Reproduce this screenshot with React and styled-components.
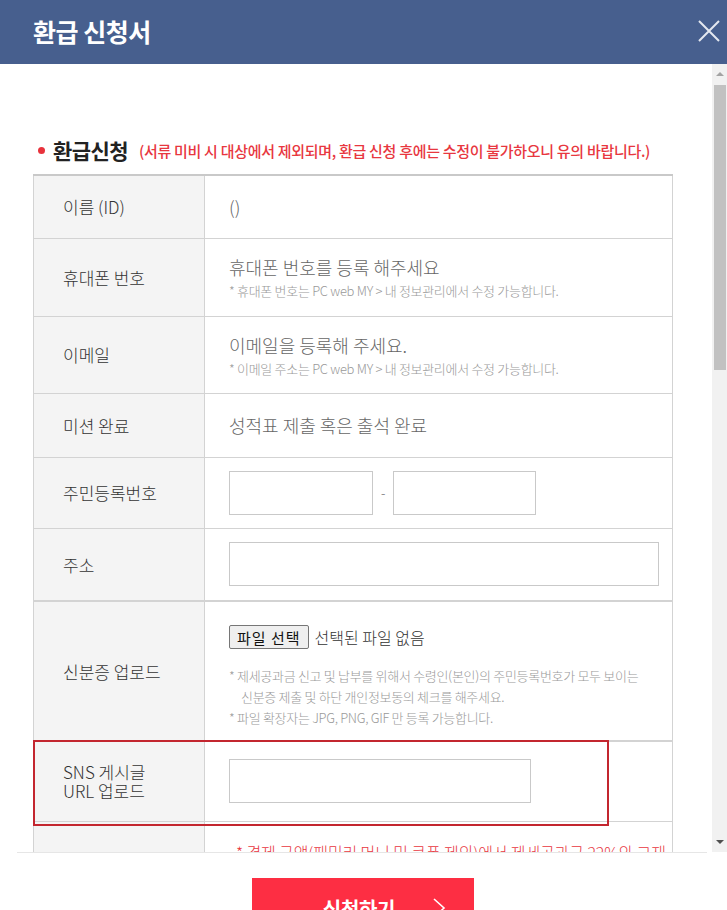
import styled, { createGlobalStyle } from "styled-components";

const GlobalStyle = createGlobalStyle`
  html, body {
    margin: 0;
    padding: 0;
    overflow: hidden;
    background: #fff;
  }
  body {
    font-family: "Noto Sans CJK KR", "Noto Sans", sans-serif;
    color: #333;
  }
  * { box-sizing: border-box; }
`

const Page = styled.div`
  width: 727px;
  display: flex;
  flex-direction: column;
`
const Header = styled.header`
  height: 64px;
  background-color: #475f8e;
  display: flex;
  align-items: center;
  justify-content: space-between;
  padding: 0 7px 3px 33px;
`
const Title = styled.h1`
  margin: 0;
  color: #fff;
  font-size: 25px;
  font-weight: 700;
  letter-spacing: -0.5px;
`
const Close = styled.button`
  border: 0;
  background: none;
  padding: 0;
  width: 22px;
  height: 22px;
  display: flex;
  cursor: pointer;
`
const Body = styled.div`
  height: 788px;
  display: flex;
`
const Viewport = styled.div`
  flex: 1;
  overflow-y: scroll;
  scrollbar-width: none;
  &::-webkit-scrollbar { display: none; }
`
const Rail = styled.div`
  width: 15px;
  background: #f1f1f1;
  display: flex;
  flex-direction: column;
  align-items: flex-end;
`
const Arrow = styled.div`
  width: 15px;
  height: 20px;
  display: flex;
  align-items: center;
  justify-content: center;
  padding-left: 1px;
  &::before {
    content: "";
    border-left: 4px solid transparent;
    border-right: 4px solid transparent;
    ${p => (p.$down ? "border-top" : "border-bottom")}: 4px solid ${p => (p.$down ? "#505050" : "#a3a3a3")};
  }
`
const Thumb = styled.div`
  width: 12px;
  height: 285px;
  margin: 1px 1px 0 0;
  background: #c1c1c1;
`
const Spacer = styled.div`
  flex: 1;
`
const Content = styled.div`
  padding: 74px 39px 60px 33px;
`
const SectionTitle = styled.div`
  display: flex;
  align-items: center;
  height: 24px;
  margin-bottom: 12px;
  padding-left: 5px;
`
const Dot = styled.span`
  width: 7px;
  height: 7px;
  border-radius: 50%;
  background: #e8323c;
  margin-right: 8px;
`
const Heading = styled.strong`
  font-size: 21px;
  font-weight: 700;
  color: #222;
  letter-spacing: -0.6px;
  margin-right: 11px;
`
const Warn = styled.span`
  font-size: 15px;
  font-weight: 500;
  color: #e8373f;
  letter-spacing: -0.3px;
`
const TableWrap = styled.div`
  position: relative;
`
const Table = styled.table`
  width: 640px;
  border-collapse: collapse;
  border-top: 2px solid #c9c9c9;
  table-layout: fixed;
`
const Row = styled.tr`
  border-top: ${p => (p.$thick ? "2px" : "1px")} solid #d3d3d3;
  border-bottom: 1px solid #d3d3d3;
`
const Label = styled.th`
  width: 171px;
  height: ${p => p.$h}px;
  background: #f4f4f4;
  border-left: 1px solid #d3d3d3;
  border-right: 1px solid #d3d3d3;
  padding: 0 0 0 29px;
  text-align: left;
  font-size: 17px;
  font-weight: 300;
  color: #333;
  line-height: 19px;
  vertical-align: middle;
`
const Value = styled.td`
  border-right: 1px solid #d3d3d3;
  padding: ${p => p.$pad || "0 13px 0 24px"};
  vertical-align: ${p => (p.$top ? "top" : "middle")};
  font-size: 18px;
  font-weight: 300;
  color: #666;
  line-height: 26px;
`
const Note = styled.p`
  margin: ${p => p.$gap || 0}px 0 0;
  padding-left: ${p => (p.$indent ? "12px" : 0)};
  font-size: 13px;
  line-height: ${p => p.$lh || 18}px;
  color: #999;
  letter-spacing: -0.3px;
`
const Input = styled.input`
  display: block;
  width: ${p => p.$w || "100%"};
  height: 44px;
  border: 1px solid #c9c9c9;
  background: #fff;
  outline: none;
  font-size: 14px;
`
const Inline = styled.div`
  display: flex;
  align-items: center;
`
const Dash = styled.span`
  margin: 0 8px;
  font-size: 13px;
  color: #666;
`
const FileBtn = styled.button`
  height: 24px;
  padding: 0 7px;
  border: 1px solid #767676;
  border-radius: 2px;
  background: #efefef;
  font-family: inherit;
  font-size: 15px;
  letter-spacing: 1px;
  color: #111;
  margin-right: 6px;
`
const FileName = styled.span`
  font-size: 16px;
  color: #333;
`
const RedNote = styled.p`
  margin: 0;
  padding-left: 7px;
  font-size: 16px;
  line-height: 24px;
  color: #e8373f;
  letter-spacing: -0.1px;
  white-space: nowrap;
`
const Mark = styled.div`
  position: absolute;
  left: 0;
  top: ${p => p.$top}px;
  width: 576px;
  height: 86px;
  border: 2px solid #c3262f;
  pointer-events: none;
`
const Select = styled.select`
  height: 44px;
  width: 140px;
  border: 1px solid #c9c9c9;
  background: #fff;
  margin-right: 8px;
  font-size: 14px;
  color: #666;
`
const Agree = styled.section`
  margin-top: 40px;
`
const Terms = styled.div`
  height: 200px;
  border: 1px solid #d3d3d3;
  padding: 16px 18px;
  font-size: 13px;
  line-height: 22px;
  color: #777;
  overflow: hidden;
`
const Check = styled.label`
  display: flex;
  align-items: center;
  gap: 6px;
  margin-top: 12px;
  font-size: 14px;
  color: #444;
`
const Footer = styled.footer`
  margin: 0 20px 0 17px;
  border-top: 1px solid #e6e6e6;
  padding-top: 25px;
  display: flex;
  justify-content: center;
`
const Submit = styled.button`
  width: 222px;
  height: 60px;
  border: 0;
  margin-left: 2px;
  background: #fd2e43;
  color: #fff;
  font-family: inherit;
  font-size: 20px;
  font-weight: 700;
  letter-spacing: -0.3px;
  display: flex;
  align-items: center;
  justify-content: center;
  gap: 36px;
  padding-left: 50px;
`

const terms = [
  "1. 수집 항목 : 이름, 아이디, 휴대폰 번호, 이메일, 주민등록번호, 주소, 신분증 사본",
  "2. 수집 목적 : 환급금 지급 및 제세공과금 신고, 납부",
  "3. 보유 기간 : 관계 법령에 따른 보존 기간 종료 시까지",
  "4. 동의를 거부할 권리가 있으며, 거부 시 환급 신청이 제한됩니다.",
]

function App() {
  return (
    <Page>
      <GlobalStyle />
      <Header>
        <Title>환급 신청서</Title>
        <Close aria-label="닫기">
          <svg width="22" height="22" viewBox="0 0 22 22">
            <path d="M1 1 L21 21 M21 1 L1 21" stroke="#e4e8f0" strokeWidth="2" fill="none" />
          </svg>
        </Close>
      </Header>
      <Body>
        <Viewport>
          <Content>
            <SectionTitle>
              <Dot />
              <Heading>환급신청</Heading>
              <Warn>(서류 미비 시 대상에서 제외되며, 환급 신청 후에는 수정이 불가하오니 유의 바랍니다.)</Warn>
            </SectionTitle>
            <TableWrap>
              <Table>
                <tbody>
                  <Row>
                    <Label $h={63}>이름 (ID)</Label>
                    <Value>()</Value>
                  </Row>
                  <Row>
                    <Label $h={78}>휴대폰 번호</Label>
                    <Value>
                      휴대폰 번호를 등록 해주세요
                      <Note $gap={2}>* 휴대폰 번호는 PC web MY &gt; 내 정보관리에서 수정 가능합니다.</Note>
                    </Value>
                  </Row>
                  <Row>
                    <Label $h={77}>이메일</Label>
                    <Value>
                      이메일을 등록해 주세요.
                      <Note $gap={2}>* 이메일 주소는 PC web MY &gt; 내 정보관리에서 수정 가능합니다.</Note>
                    </Value>
                  </Row>
                  <Row>
                    <Label $h={64}>미션 완료</Label>
                    <Value>성적표 제출 혹은 출석 완료</Value>
                  </Row>
                  <Row>
                    <Label $h={71}>주민등록번호</Label>
                    <Value>
                      <Inline>
                        <Input $w="144px" />
                        <Dash>-</Dash>
                        <Input $w="143px" />
                      </Inline>
                    </Value>
                  </Row>
                  <Row>
                    <Label $h={73}>주소</Label>
                    <Value>
                      <Input />
                    </Value>
                  </Row>
                  <Row $thick>
                    <Label $h={140}>신분증 업로드</Label>
                    <Value $top $pad="22px 13px 0 24px">
                      <Inline>
                        <FileBtn>파일 선택</FileBtn>
                        <FileName>선택된 파일 없음</FileName>
                      </Inline>
                      <Note $gap={15} $lh={21}>* 제세공과금 신고 및 납부를 위해서 수령인(본인)의 주민등록번호가 모두 보이는</Note>
                      <Note $indent $lh={21}>신분증 제출 및 하단 개인정보동의 체크를 해주세요.</Note>
                      <Note $lh={22}>* 파일 확장자는 JPG, PNG, GIF 만 등록 가능합니다.</Note>
                    </Value>
                  </Row>
                  <Row $thick>
                    <Label $h={80}>SNS 게시글<br />URL 업로드</Label>
                    <Value>
                      <Input $w="302px" />
                    </Value>
                  </Row>
                  <Row>
                    <Label $h={150}>제세공과금</Label>
                    <Value $top $pad="18px 2px 18px 24px">
                      <RedNote>* 결제 금액(패밀리 머니 및 쿠폰 제외)에서 제세공과금 22%와 교재</RedNote>
                      <RedNote>&nbsp;&nbsp;비용을 제외한 금액이 환급됩니다.</RedNote>
                      <RedNote>* 환급금은 신청 완료 후 영업일 기준 14일 이내에 지급됩니다.</RedNote>
                      <RedNote>* 본인 명의의 계좌만 등록 가능합니다.</RedNote>
                    </Value>
                  </Row>
                  <Row>
                    <Label $h={72}>환급 계좌</Label>
                    <Value>
                      <Inline>
                        <Select defaultValue="">
                          <option value="">은행 선택</option>
                        </Select>
                        <Input $w="240px" />
                      </Inline>
                    </Value>
                  </Row>
                </tbody>
              </Table>
              <Mark $top={566} />
            </TableWrap>

            <Agree>
              <SectionTitle>
                <Dot />
                <Heading>개인정보 수집 및 이용 동의</Heading>
              </SectionTitle>
              <Terms>
                {terms.map((t, i) => (
                  <div key={i}>{t}</div>
                ))}
              </Terms>
              <Check>
                <input type="checkbox" /> 개인정보 수집 및 이용에 동의합니다.
              </Check>
            </Agree>

            <Agree>
              <SectionTitle>
                <Dot />
                <Heading>고유식별정보 처리 동의</Heading>
              </SectionTitle>
              <Terms>
                {terms.map((t, i) => (
                  <div key={i}>{t}</div>
                ))}
              </Terms>
              <Check>
                <input type="checkbox" /> 고유식별정보 처리에 동의합니다.
              </Check>
            </Agree>
          </Content>
        </Viewport>
        <Rail aria-hidden="true">
          <Arrow />
          <Thumb />
          <Spacer />
          <Arrow $down />
        </Rail>
      </Body>
      <Footer>
        <Submit>
          신청하기
          <svg width="16" height="22" viewBox="0 0 16 22">
            <path d="M3 2 L13 11 L3 20" stroke="#fff" strokeWidth="1.6" fill="none" />
          </svg>
        </Submit>
      </Footer>
    </Page>
  );
}

export default App;
